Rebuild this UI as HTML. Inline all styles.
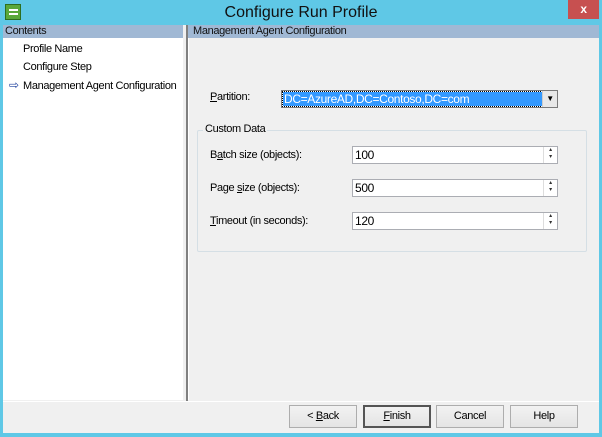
<!DOCTYPE html>
<html><head><style>
*{margin:0;padding:0;box-sizing:border-box}
body{width:602px;height:437px;background:#5fc8e6;font-family:"Liberation Sans",sans-serif;font-size:11px;letter-spacing:-0.35px;color:#000;position:relative;overflow:hidden;white-space:nowrap}
.a{position:absolute}
.title{left:0;top:0;width:602px;height:25px;text-align:center;font-size:16px;letter-spacing:0;line-height:25px;color:#111}
.client{left:3px;top:25px;width:596px;height:408px;background:#f0f0f0}
.hdr{background:#a0b8d4;height:13px;line-height:13px;padding-left:2px;color:#111}
.u{text-decoration:underline}
.btn{top:405px;height:23px;width:68px;border:1px solid #adadad;background:linear-gradient(#f2f2f2,#e4e4e4);text-align:center;line-height:21px}
.fld{background:#fff;border:1px solid #abadb3;height:18px;line-height:16px;padding-left:2px;font-size:12px}
.spin{right:0;top:0;width:14px;height:16px;border-left:1px solid #ddd;font-size:6px;line-height:7px;text-align:center;color:#333}
</style></head><body>
<div class="a" style="left:5px;top:4px;width:16px;height:16px;background:#5aa83a;border:1px solid #2e6e20"><div class="a" style="left:3px;top:4px;width:9px;height:6px;border:2px solid #fff;border-width:2px 0"></div></div>
<div class="a title">Configure Run Profile</div>
<div class="a" style="left:568px;top:0;width:31px;height:19px;background:#c75050;color:#fff;text-align:center;font-weight:bold;font-size:12px;line-height:18px">x</div>
<div class="a client">
 <div class="a hdr" style="left:0;top:0;width:180px">Contents</div>
 <div class="a" style="left:0;top:13px;width:180px;height:362px;background:#fff">
  <div class="a" style="left:20px;top:5px">Profile Name</div>
  <div class="a" style="left:20px;top:23px">Configure Step</div>
  <div class="a" style="left:6px;top:41px;color:#1c3e9c;font-size:12px;line-height:12px">⇨</div>
  <div class="a" style="left:20px;top:42px">Management Agent Configuration</div>
 </div>
 <div class="a" style="left:183px;top:0;width:2px;height:376px;background:#808080"></div>
 <div class="a hdr" style="left:185px;top:0;width:411px;padding-left:5px">Management Agent Configuration</div>
 <div class="a" style="left:185px;top:13px;width:411px;height:362px;border-left:1px solid #fff"></div>
 <div class="a" style="left:207px;top:66px"><span class="u">P</span>artition:</div>
 <div class="a" style="left:278px;top:65px;width:277px;height:18px;border:1px solid #7a7a7a;background:#fff">
  <div class="a" style="left:1px;top:1px;width:259px;height:14px;background:#3399ff;color:#fff;font-size:12px;line-height:14px;padding-left:1px;outline:1px dotted #000">DC=AzureAD,DC=Contoso,DC=com</div>
  <div class="a" style="right:0;top:0;width:15px;height:16px;background:#e8e8e8;border-left:1px solid #ccc;text-align:center;font-size:8px;line-height:16px">▼</div>
 </div>
 <div class="a" style="left:194px;top:105px;width:390px;height:122px;border:1px solid #d5dfe5;border-radius:2px"></div>
 <div class="a" style="left:200px;top:98px;background:#f0f0f0;padding:0 2px">Custom Data</div>
 <div class="a" style="left:207px;top:124px">B<span class="u">a</span>tch size (objects):</div>
 <div class="a fld" style="left:349px;top:121px;width:206px">100<div class="a spin">▴<br>▾</div></div>
 <div class="a" style="left:207px;top:157px">Page <span class="u">s</span>ize (objects):</div>
 <div class="a fld" style="left:349px;top:154px;width:206px">500<div class="a spin">▴<br>▾</div></div>
 <div class="a" style="left:207px;top:190px"><span class="u">T</span>imeout (in seconds):</div>
 <div class="a fld" style="left:349px;top:187px;width:206px">120<div class="a spin">▴<br>▾</div></div>
 <div class="a" style="left:0;top:376px;width:596px;height:1px;background:#fff"></div>
</div>
<div class="a btn" style="left:289px">&lt; <span class="u">B</span>ack</div>
<div class="a btn" style="left:363px;border:2px solid #555;line-height:19px"><span class="u">F</span>inish</div>
<div class="a btn" style="left:436px">Cancel</div>
<div class="a btn" style="left:510px">Help</div>
</body></html>
